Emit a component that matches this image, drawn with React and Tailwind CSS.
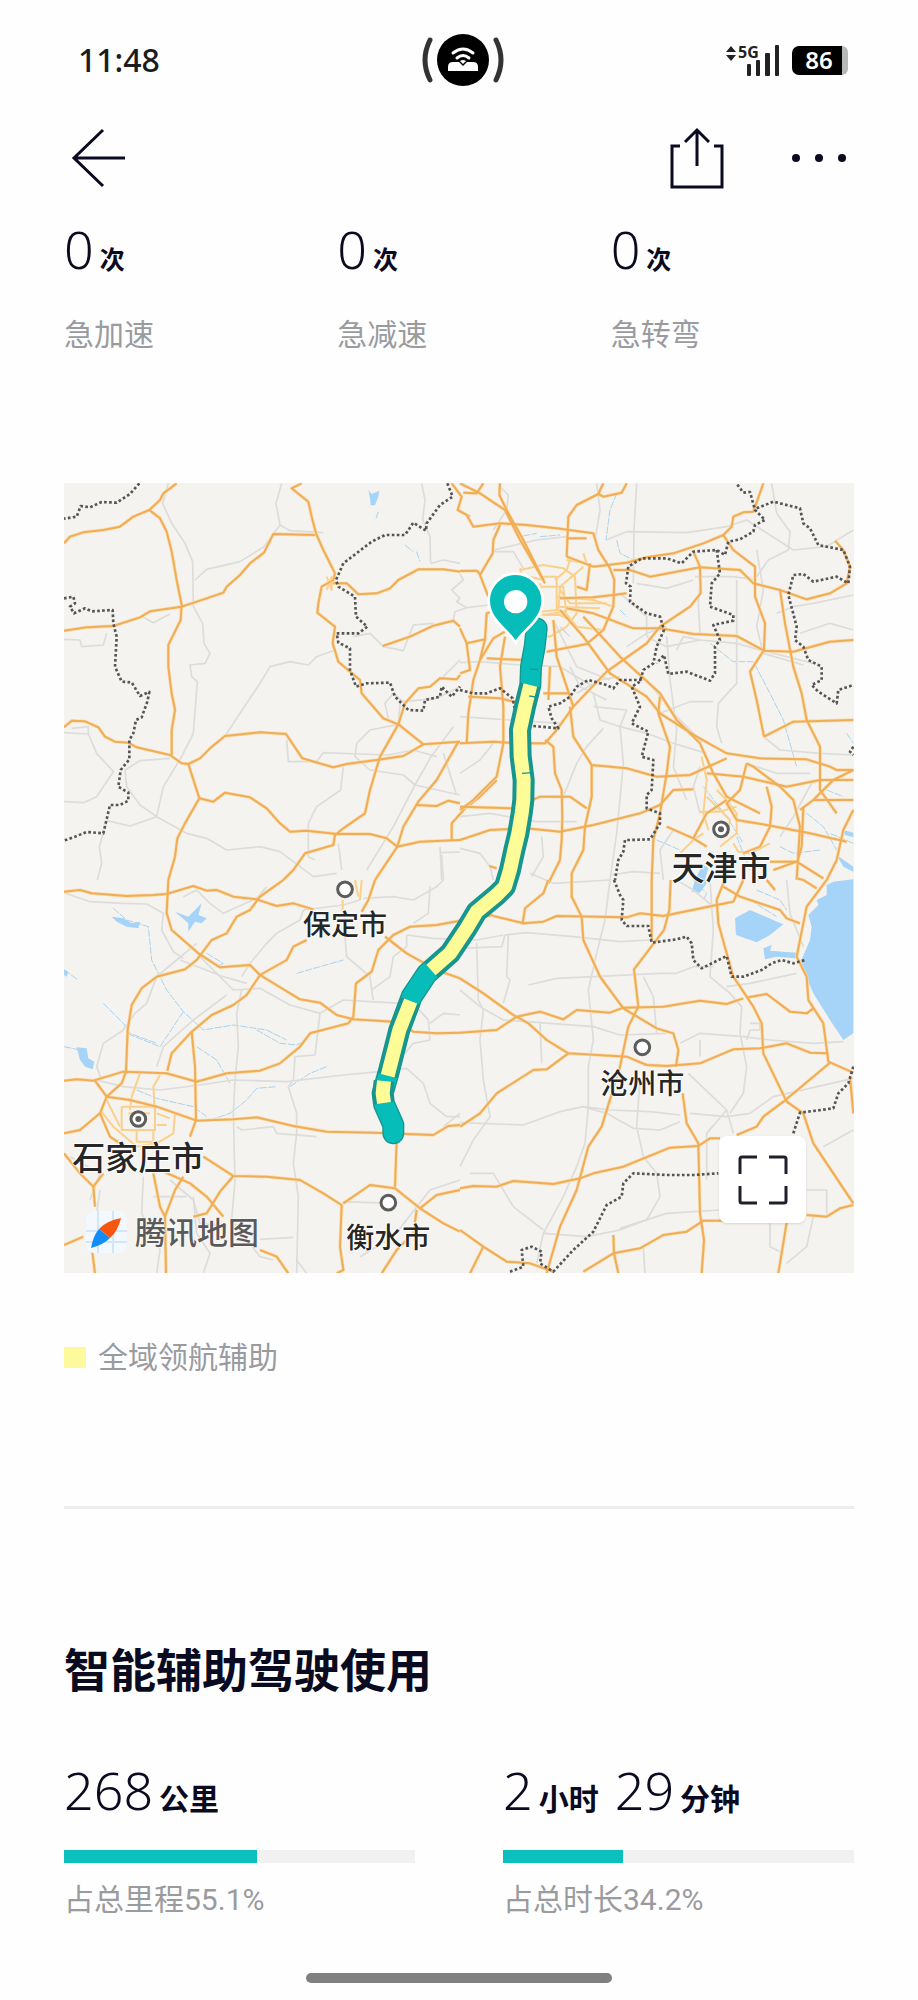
import React from "react";

// The map is drawn on four 1200x1200 tiles; lines are listed per tile.
const TILES = [
  {
    x: 0,
    y: 0,
    roads: [
      "325,10 308,70 335,130 375,190 398,245 400,380 428,430 432,490 450,520 435,550 390,555 395,590 412,605 400,760 365,830 310,920 290,1010",
      "665,10 648,70 660,135 612,200 540,245 440,268 405,300",
      "660,135 690,152 790,158",
      "1085,10 1095,60 1088,120 1110,170 1112,250",
      "1112,250 1150,240 1200,250",
      "12,478 60,480 65,500 130,495 140,460",
      "250,412 280,428 330,402",
      "495,768 600,610 630,560 690,545 745,555 770,530 820,512",
      "880,470 930,460 970,500 1030,512 1060,435 1120,430",
      "12,758 85,762 110,820 160,875 110,950 70,968 12,965",
      "85,762 85,740 35,745",
      "330,835 240,842 195,870 200,920 240,975 290,1010 380,1060 440,1075 500,1110 600,1100 660,1115 720,1160 760,1190 830,1180",
      "290,1010 210,1038 140,1022 118,1100 125,1150 112,1200",
      "680,780 685,845 770,845 790,818 900,822 985,825 1060,810 1130,830",
      "1015,733 930,750 890,790 885,830 930,870 1030,885 1065,915 1200,945",
      "850,860 842,930 770,980 745,1030 745,1130 765,1140",
      "1065,915 1000,1040 920,1170",
      "1150,820 1190,945",
      "1180,740 1110,835 1065,915",
      "985,715 975,670 1000,640 1030,665 1130,655 1200,620",
      "1015,733 1020,670",
      "835,1090 845,1170",
      "1140,1100 1145,1200",
      "1140,1118 1200,1116",
      "1150,590 1200,540",
      "1200,282 1210,300 1175,330 1200,355 1190,365 1220,383 1285,375",
      "1220,383 1185,395 1180,420",
    ],
    highways: [
      "12,190 30,170 70,157 130,150 180,140 220,110 268,90 300,60 310,40 350,10",
      "268,90 300,115 320,155 335,215 350,300 365,375 362,420 325,495 325,560 335,640 345,690 335,750 335,825",
      "12,452 80,442 160,438 240,412 270,394 365,380 440,355 490,338 500,320 540,285 570,250 612,218 640,162 765,165",
      "725,10 695,25 745,65 755,110 768,160 790,210 825,280 820,300 785,320 775,370 772,398 825,440 818,490 835,545 900,600 905,640 970,715 1015,733 1090,793 1200,785",
      "820,310 860,310 895,343 950,340 990,325 1015,300 1075,268 1150,268 1200,275",
      "968,498 1050,470 1120,437 1180,422 1200,440",
      "12,742 35,722 75,724 115,742 135,770 165,785 205,788 230,802 330,825 365,850 385,852 420,835 450,805 495,768 600,757 678,762 727,835 820,862 860,852 950,840 1030,828 1090,793",
      "385,852 418,955 375,1030 352,1075 345,1130 325,1200",
      "418,955 460,965 495,938 570,952 620,985 660,1030 690,1055 740,1052 830,1062 930,1062 980,1075 1012,1100 1080,1085 1200,1080",
      "1012,1100 945,1200",
      "1012,1100 1030,1040 1075,965 1130,900 1195,785",
      "1015,733 960,830 930,930 915,1000 850,1045 825,1065 820,1095 735,1120 700,1170 670,1200",
      "1015,733 1035,670 1075,625 1110,620 1140,595 1190,598 1200,585",
      "1070,975 1130,978 1165,962 1200,970",
      "1175,1080 1175,1030 1215,985 1260,950 1310,900",
      "1175,10 1205,50 1193,90 1230,110",
      "1288,1158 1310,1165",
    ],
    borders: [
      "238,10 210,42 170,68 125,66 90,82 62,78 50,110 12,116",
      "12,355 40,350 45,370 30,380 42,400 75,385 95,394 158,390 160,430 170,470 165,560 185,605 215,607 240,648 268,636 262,665 245,712 228,720 220,760 208,780 208,838 182,870 175,920 205,938 205,962 180,975 150,975 130,1060 80,1056 45,1070 12,1082",
      "1162,10 1178,50 1140,75 1100,130 1098,152 1060,128 1035,165 975,165 935,185 850,250 828,300 835,320 885,350 888,410 922,440 895,460 830,460 835,488 870,505 870,570 888,620 920,610 990,608 1005,650 1045,690 1090,692 1095,660 1140,650 1145,620 1175,650 1200,620",
    ],
    rivers: ["955,95 948,115", "1035,195 1060,215", "1070,215 1080,245"],
    water: ["925,30 935,42 958,32 955,50 945,76 932,76 930,55"],
    streets: ["800,290 815,330 815,290 800,330", "798,310 835,310"],
  },
  {
    x: 1200,
    y: 0,
    roads: [
      "120,20 145,45 140,90 100,150",
      "438,180 500,155 680,158 800,140 860,120 930,165 1000,210",
      "530,10 522,150 520,310",
      "410,10 420,90 405,180",
      "935,10 950,100 990,155 985,210 925,240 890,290",
      "1000,210 1100,200 1180,150",
      "705,290 820,290 890,300",
      "530,310 620,325 700,300",
      "720,310 715,370 720,460",
      "890,210 910,330 890,440 910,520 1030,555",
      "560,470 620,500 720,480 830,490 900,510 1060,550",
      "830,300 830,540 830,610 775,670 770,740 785,790",
      "620,470 630,600 650,750 640,860 680,960",
      "400,640 420,720 480,740 500,690 400,680",
      "350,640 420,600 480,590",
      "480,740 490,850 470,1060 450,1200",
      "480,740 560,760 640,790 740,820",
      "0,548 60,545 180,555 300,560 400,620",
      "0,710 150,720 300,730",
      "0,1010 90,1000 230,1025 350,1025",
      "430,745 380,800 350,850 310,950",
      "1180,450 1110,430 1020,460",
      "950,400 1000,380 1060,370 1180,345",
      "910,770 960,810 1080,820 1180,825",
      "600,700 690,665 760,665",
      "330,560 360,620 440,660",
      "650,510 670,470 720,480",
      "640,1050 600,1110 610,1200",
      "0,1105 60,1120 90,1160 100,1200",
      "860,850 950,880 1050,880",
      "720,860 700,920 720,1000",
      "1060,900 1000,1010 960,1070",
      "500,500 560,460 620,440",
      "100,210 230,180 320,170",
      "280,420 350,560 450,600",
      "480,340 560,410 560,470",
      "0,880 60,840 100,790",
      "560,600 640,700 700,760",
      "100,215 160,215 190,265",
      "210,1180 280,1210 450,1200",
      "245,1070 250,1130 215,1190",
      "450,1185 520,1175 600,1180",
    ],
    highways: [
      "0,10 60,40 135,90 175,170 215,240 250,300",
      "120,10 118,45 145,100 190,180 235,270 255,310",
      "10,38 50,40 70,10",
      "20,105 40,140 120,130 200,135 290,145 400,160 415,210 450,265 463,300 460,380 430,450 380,492 260,515",
      "500,10 485,38 430,50 415,42 430,10",
      "415,42 350,75 325,110 320,230",
      "320,175 380,175",
      "120,135 100,180 98,220 60,285 85,350",
      "320,230 400,260 500,248 560,232 640,220 730,190 790,165 815,140 820,110 850,97 880,95 910,10",
      "460,270 510,270 570,290 720,262 840,270 880,310 960,330 1040,358 1110,340 1160,310 1170,260 1150,210 1125,182",
      "790,165 820,210 885,260 885,350 915,430 912,510 870,575 890,660 912,770",
      "700,215 720,260 722,340 690,380 600,440 560,490 440,575 340,680 290,750 255,790 180,790 100,785 0,790",
      "320,385 400,400 520,445 600,445 700,462 830,468 912,512 1000,515 1110,485 1180,480",
      "300,390 370,470 450,580 560,650 600,700 710,770 800,820 900,835 1040,838 1110,860 1130,870 1180,870",
      "370,410 480,530 600,640 650,720 720,790 760,880 800,950 900,1000",
      "960,330 975,430 1000,560 1025,640 1040,720 1080,800 1080,930 1130,1000",
      "912,770 1000,725 1180,720",
      "600,650 595,700 630,800 620,880 600,1000 580,1080 575,1200",
      "330,680 340,770 395,855 500,865 590,890 690,885 800,835",
      "395,855 395,950 375,1040 370,1110 335,1180 335,1200",
      "0,980 160,985 240,950 330,950 380,985",
      "0,1080 90,1050 200,1045 300,1055 400,1035 540,1000 600,975 640,930 700,928",
      "280,420 290,530 340,680",
      "255,780 280,800 285,880 305,930 307,1010 305,1080 300,1140 265,1210",
      "0,445 20,490 30,570 0,580",
      "20,490 75,478 80,400 95,395",
      "75,478 60,540 40,600 25,700 20,790",
      "60,540 100,475 135,455",
      "135,470 120,560 130,680 130,790 110,890 40,960 0,990",
      "80,535 190,540",
      "0,273 50,272 62,285",
      "25,650 120,655 180,670",
      "860,850 880,860 960,920 1000,960 1020,1040 1010,1200",
      "860,850 840,930 800,970 830,1020 920,1035 1050,1060 1160,1085",
      "740,880 850,890 980,920 1080,900 1180,900",
      "920,920 935,980 930,1040 900,1100 850,1120",
      "1020,990 1060,960 1180,960",
      "1030,980 1025,1100 1012,1145",
      "1180,990 1150,1050 1130,1140 1100,1200",
      "620,1040 700,1075 740,1100",
      "700,1075 740,1000 800,960",
      "930,1145 1010,1145 1090,1195",
      "940,1170 1010,1145",
      "1060,960 1120,900 1180,870",
      "460,345 400,352 300,355",
      "500,340 460,345",
      "250,640 330,640",
      "390,250 380,330 350,320",
      "270,560 265,660",
    ],
    borders: [
      "832,14 850,38 870,36 885,90 915,120 885,135 880,155 840,178 805,185 795,225 770,210 700,215 665,250 620,235 545,235 505,260 498,310 512,320 510,365 560,400 600,410 612,450 590,500 580,550 550,570 540,605 515,620 540,680 515,730 565,755 545,830 580,840 575,930 560,945 560,985 600,1000 600,1030 570,1078 510,1080 495,1080 490,1115 475,1140 465,1200",
      "890,85 940,65 1020,85 1030,130 1050,145 1075,195 1150,210 1170,260 1165,310 1130,290 1060,305 1030,282 1000,285 985,345 1010,440 1005,480 1030,500 1045,540 1085,560 1085,600 1055,615 1075,635 1130,670 1135,630 1180,615",
      "770,210 780,280 755,310 750,380 820,405 820,422 760,435 780,480 765,500 765,580 750,602 680,575 625,582 612,525 590,550",
      "545,600 480,600 460,625 440,615 385,600 350,620 330,650 300,670 265,680 275,715 295,745 220,738",
      "0,630 40,640 80,640 120,625 158,655 165,690",
      "1180,800 1170,815 1180,825",
    ],
    rivers: [
      "470,40 450,90 438,180",
      "470,180 480,220 520,240",
      "750,490 820,545 880,545 930,640 970,720 1010,860",
      "190,168 230,160",
      "240,170 300,165",
      "730,920 800,1010 850,1090",
      "590,1080 660,1110",
      "1100,930 1150,950",
      "1040,1000 1090,1040 1130,1110",
      "960,1100 1000,1120 1080,1110",
      "480,390 500,410",
      "830,1070 870,1170",
      "1180,1090 1110,1060",
      "1160,760 1180,790",
      "320,460 300,440 330,470",
    ],
    water: ["1150,1050 1180,1058 1180,1072 1155,1065", "1130,1125 1180,1160 1180,1175 1150,1160", "730,1155 745,1165 735,1200 705,1200 720,1170"],
    streets: [
      "180,270 250,255 310,265 345,290 350,400 320,440 270,470 220,460",
      "250,290 290,290 290,390 240,395",
      "240,320 310,320 318,395 245,405",
      "245,340 240,310",
      "285,300 320,270 330,240",
      "320,240 380,250 370,220",
      "300,330 330,370 440,370",
      "290,350 400,360 460,380",
      "290,380 420,385",
      "295,395 300,320 370,260",
      "310,390 350,440 430,450",
      "180,265 185,285 250,300",
      "725,830 740,900 730,1000 745,1050",
      "720,995 780,995 830,980",
      "770,930 800,960 830,1000 830,1060 780,1100",
      "740,950 780,990 810,1020 800,1070",
      "660,1120 700,1080 730,1060",
      "820,1090 835,1115 870,1120 930,1090",
      "255,405 300,405 330,420",
    ],
  },
  {
    x: 0,
    y: 1200,
    roads: [
      "12,38 90,65 190,70 260,72 310,100 305,150 340,215 370,235",
      "370,50 410,30 450,70 490,100 590,55 620,20",
      "410,190 350,240 290,290 260,370 225,400 190,450 130,490 110,560 125,600",
      "420,230 520,330 600,325 690,375 780,400",
      "360,240 490,290 560,310",
      "545,290 570,250 620,190 650,160 720,120 730,90 850,75 900,60",
      "545,330 530,400 535,500 525,600 520,700 525,900 515,1020 600,1130 640,1140",
      "110,600 190,620 300,630 420,615 520,600 680,605 850,585 960,575 1040,565 1090,610 1110,670 1160,710 1200,710",
      "780,400 765,525 705,530 700,600 685,620 710,700 710,760 700,850 715,950 710,1180",
      "780,400 850,360 930,365 1030,370",
      "1035,520 1060,490 1110,480 1105,420 1060,370",
      "1040,165 1040,200 1000,230 990,290 935,330 940,360",
      "1110,20 1105,100 1060,130",
      "1145,-75 1150,0 1130,20 1060,60 1000,50 910,55",
      "530,740 545,750 640,740 650,760 770,770",
      "1200,700 1150,740",
      "1200,900 1110,930 1000,1070 900,1130",
      "1200,405 1150,400 1110,430",
      "1040,165 1120,175 1250,180 1330,165",
      "330,900 400,960 420,1030 500,1040",
      "30,830 120,880 90,960",
      "250,890 245,1000 300,1110 290,1180",
      "280,950 380,950",
      "600,1078 700,1072",
      "120,930 110,1000",
      "855,170 860,230 930,290 935,330",
      "850,965 1000,970",
      "430,1180 450,1120 410,1060 400,950",
      "710,1140 740,1180",
      "500,345 400,420 310,500 290,560",
    ],
    highways: [
      "12,35 60,30 95,40 200,48 280,45 320,42 400,18 440,32 470,30 520,50 590,58 650,78 700,70 760,88",
      "325,0 320,100 335,150 415,220 480,262 570,255 600,285 720,358 780,368 830,405 880,418 1000,425 1060,455 1130,460 1200,458",
      "670,0 600,50 570,90 530,110 500,160 455,180 410,240 375,268 290,290 245,325 215,375 203,450 198,575",
      "740,180 700,200 680,240 600,285 560,345 520,375 455,405 390,460 335,520 322,572",
      "395,455 405,560 408,720 390,770",
      "945,0 925,60 905,95",
      "12,602 50,598 100,602 190,575 320,580 410,605 500,580 600,572 660,550 720,500 750,460 865,430 880,410 888,310 935,275 955,210 1000,165 1050,140 1130,135 1200,122 1300,105",
      "975,170 1040,220 1130,270 1200,295",
      "198,575 185,610 140,650 120,700 60,750 12,760",
      "105,602 140,650 210,660 290,680 410,722 520,718 590,712 700,738 800,755 940,758 1120,765 1165,738 1200,735",
      "1010,780 1005,920",
      "850,970 930,915 1005,925 1080,985 1150,1030 1200,1055",
      "430,830 520,888 620,890 720,900 790,940 845,975 840,1100 850,1170 830,1180",
      "520,888 480,935 440,1000 400,1010",
      "12,820 60,880 100,920 105,980",
      "130,880 100,920",
      "280,880 300,980 315,1010 345,930 370,890",
      "300,870 390,910 440,950 490,1010",
      "315,1010 318,1180",
      "95,1100 105,1180",
      "12,1095 70,1070",
      "1070,990 1060,1060 1010,1110 965,1180",
      "1080,985 1130,945 1200,930",
      "600,1110 650,1130 685,1180",
      "120,700 150,770 180,790",
    ],
    borders: [],
    rivers: [
      "160,85 200,120 265,140 275,240 320,330 370,395 430,450 520,435 620,450 680,480",
      "590,450 660,490 710,495 740,480",
      "370,395 300,500 200,460",
      "130,370 190,430 210,460 290,490",
      "410,500 470,540 510,610",
      "450,720 510,700 560,660 590,625 650,620",
      "690,620 750,580 800,560",
      "230,630 290,655 400,680 440,710",
      "12,270 55,300",
      "710,280 850,240",
      "12,500 60,510",
      "440,220 490,250 470,260",
    ],
    water: [
      "345,95 385,110 425,70 415,105 440,115 425,130 405,125 385,155 385,130",
      "155,110 190,115 215,130 240,125 235,145 200,140 170,125",
      "50,502 80,505 85,535 103,545 98,568 75,560 60,540",
      "12,268 25,275 20,290 12,285",
    ],
    streets: [
      "185,680 285,680 285,750 185,750 185,680",
      "240,580 215,650 210,690",
      "300,585 280,620 285,700",
      "230,750 230,785 280,785 280,750",
      "120,690 160,740 230,800 290,790 340,760 345,700",
      "140,660 180,740",
      "205,700 270,700",
      "290,700 330,715",
      "290,735 320,735",
      "848,60 848,95",
      "905,0 900,60",
      "885,0 895,50",
    ],
  },
  {
    x: 1200,
    y: 1200,
    roads: [
      "450,0 435,120 410,220 385,330 400,480 385,560 385,680 375,790 350,860 310,950 250,1060 230,1150",
      "0,205 125,200 135,165 200,158 340,170 480,185 570,180",
      "145,165 140,290 150,300 130,370",
      "205,315 290,295 400,290 600,280 650,280 700,260 760,260",
      "50,190 55,360 70,390 60,480 70,600 90,710 40,780 0,860",
      "0,330 60,380 130,420 200,425 400,440 480,465 620,460",
      "240,430 245,550",
      "0,728 190,735 300,695 370,680 440,700 520,745 600,750 660,725",
      "370,680 450,690 570,695 660,705",
      "550,290 580,350 590,460",
      "540,600 530,740 550,830 590,880 600,950 560,1020 480,1050 380,1070 250,1060",
      "30,880 100,880 160,980 250,1050",
      "685,580 800,690 820,760",
      "660,490 720,460 850,470 930,480 1060,490 1150,485",
      "750,0 760,150 750,290 810,340 845,380 840,460 860,560 850,640 810,700",
      "690,700 800,710 870,700 940,650 1180,595",
      "480,1045 620,1000 780,990",
      "550,1100 555,1180",
      "980,0 990,100 1030,200",
      "800,320 870,310 1010,280",
      "650,0 700,30 760,80",
      "1040,930 1100,930 1100,1000",
      "1060,1010 1040,1100 980,1150",
      "1180,750 1090,800",
      "930,1030 930,1100 960,1115",
      "870,430 900,430 900,450 870,450 860,480",
      "800,690 740,760 740,900",
      "720,480 720,530",
    ],
    highways: [
      "100,108 190,130 250,125 290,108 500,112 540,100 610,108 770,75 820,65 850,0",
      "265,0 250,40 195,85 188,130",
      "335,-5 335,50 365,110 370,180 420,290 490,385 590,445 640,460 655,510 648,560",
      "575,0 575,180",
      "632,0 628,90 612,150 522,268 535,380 505,440 480,560 425,740 385,800 350,930 300,1040 260,1180",
      "0,295 70,340 160,405 205,430 260,480 325,520 500,530 560,555 620,558 720,550 820,508 900,505 980,490 1050,518 1105,520",
      "0,458 110,450 170,410 240,395 310,418 350,390 450,398 490,383 610,380 720,362 800,372 850,355",
      "0,740 60,700 110,640 220,570 260,568 325,520",
      "790,10 770,60 775,130 800,220 820,290 880,380 905,430 910,520 980,665 1030,700 1060,790 1180,970",
      "865,352 920,342 990,395 1040,400 1060,385",
      "1100,0 1040,80 1010,230 1040,290 1045,360 1090,430 1105,545 1180,578",
      "1110,548 970,665 910,710 890,740 830,765",
      "668,640 680,730 715,790 720,1000 732,1080 725,1180",
      "0,925 40,918 110,920 160,903 280,912 360,895 400,880 490,860 630,803 715,798 750,775 780,775",
      "0,1050 70,1100 140,1145 210,1150 280,1175",
      "70,1100 30,1180",
      "370,1175 460,1120 540,1105 610,1065 680,1055 730,1022 790,1022",
      "460,1065 462,1120 475,1180",
      "980,1028 955,1180",
      "1040,1005 1100,1010 1140,985 1180,975",
      "790,20 840,50 960,90 980,115 1020,130",
      "1170,590 1180,700",
      "920,0 945,30",
      "1010,-5 1030,0 1070,25",
    ],
    borders: [
      "462,0 480,45 490,60 485,120 500,138 565,138 575,188 650,178 680,170 695,190 700,240 725,265 800,228 815,290 850,290 905,270 935,250 965,240 1000,250 1035,240",
      "1180,560 1165,610 1135,640 1120,685 1020,698 1000,760",
      "150,1175 190,1160 185,1110 215,1100 245,1115 240,1150 280,1175 340,1110 400,1055 440,975 485,950 490,910 520,880 620,885 700,885 775,880",
    ],
    rivers: ["700,0 740,40 730,60", "870,60 950,110", "890,30 960,60 980,90"],
    water: [
      "1180,-2 1120,5 1100,15 1100,45 1070,60 1075,75 1045,105 1055,140 1050,180 1020,250 1060,340 1110,420 1150,480 1180,460",
      "825,115 870,90 970,133 930,165 890,187 828,165",
      "910,205 935,195 930,212 1010,218 1005,235 950,230 915,238",
      "705,0 735,0 740,10 720,38 695,35",
    ],
    streets: [],
  },
];

const CITIES = [
  { name: "天津市", x: 1983, y: 1048, labelY: 1162, capital: true },
  { name: "石家庄市", x: 235, y: 1917, labelY: 2030, capital: true },
  { name: "保定市", x: 855, y: 1228, labelY: 1332, capital: false },
  { name: "沧州市", x: 1747, y: 1702, labelY: 1809, capital: false },
  { name: "衡水市", x: 985, y: 2168, labelY: 2272, capital: false },
];

const ROUTE =
  "1430,445 1424,500 1413,560 1411,615 1395,680 1380,750 1382,830 1391,900 1390,960 1385,1000 1375,1060 1363,1110 1350,1170 1335,1220 1310,1245 1250,1295 1220,1345 1170,1420 1100,1482 1055,1550 1018,1650 985,1780 968,1840 972,1872 1000,1935 1000,1960";

const ASSISTED = [
  "1411,615 1395,680 1380,750 1382,830 1391,900 1390,960 1385,1000 1375,1060 1363,1110 1350,1170 1335,1220 1310,1245 1250,1295 1220,1345 1170,1420 1113,1470",
  "1052,1563 1018,1650 983,1787",
  "972,1803 968,1840 972,1869",
];

const EVENTS = [
  { value: 0, unit: "次", label: "急加速" },
  { value: 0, unit: "次", label: "急减速" },
  { value: 0, unit: "次", label: "急转弯" },
];

const USAGE = [
  { parts: [["268", "公里"]], label: "占总里程", percent: 55.1 },
  { parts: [["2", "小时"], ["29", "分钟"]], label: "占总时长", percent: 34.2 },
];

const Lines = ({ items, ...rest }) => (
  <g fill="none" strokeLinejoin="round" {...rest}>
    {items.map((points) => (
      <polyline key={points} points={points} />
    ))}
  </g>
);

const StatusBar = () => (
  <div className="flex h-[120px] items-center justify-between px-[70px]">
    <span className="flex-1 pl-2 text-[32px] leading-none font-medium text-[#1c1c1c]">11:48</span>

    <svg width="82" height="52" viewBox="0 0 82 52" fill="none">
      <path d="M8 6Q-2 26 8 46M74 6Q84 26 74 46" stroke="#333" strokeWidth="5" strokeLinecap="round" />
      <circle cx="41" cy="26" r="26" fill="#000" />
      <path d="M26 37v-4q0-5 5-5h20q5 0 5 5v4z" fill="#fff" />
      <path d="M33 24q8-7 16 0l-8 8z" fill="#000" />
      <path d="M31 19q10-8 20 0M35 24q6-5 12 0" stroke="#fff" strokeWidth="3" strokeLinecap="round" />
      <path d="M38 27q3-2 6 0l-3 3z" fill="#fff" />
    </svg>

    <div className="flex flex-1 items-center justify-end gap-3">
      <div className="relative">
        <svg width="54" height="32" viewBox="0 0 54 32" fill="#222">
          <path d="M0 8l5-6 5 6zM0 11h10l-5 6z" />
          <rect x="21" y="20" width="4" height="12" rx="1" />
          <rect x="30" y="16" width="4" height="16" rx="1" />
          <rect x="39" y="9" width="5" height="23" rx="1" />
          <rect x="49" y="1" width="4" height="31" rx="1" />
        </svg>
        <span className="absolute top-0 left-3 text-[16px] leading-4 font-bold text-[#222]">5G</span>
      </div>
      <div className="flex items-center">
        <span className="flex h-[29px] w-[50px] items-center justify-center rounded-l-[7px] bg-black pl-1 text-[24px] leading-none font-semibold text-white">
          86
        </span>
        <span className="h-[29px] w-[6px] rounded-r-[6px] bg-[#b8b8b8]" />
      </div>
    </div>
  </div>
);

const NavBar = () => (
  <header className="flex h-[76px] items-center justify-between px-[71px] text-[#0a0a20]">
    <button aria-label="返回">
      <svg width="54" height="60" viewBox="0 0 54 60" fill="none" stroke="currentColor" strokeWidth="3">
        <path d="M32 2L3 30l29 28M3 30h51" />
      </svg>
    </button>
    <div className="flex items-center gap-[66px]">
      <button aria-label="分享">
        <svg width="56" height="62" viewBox="0 0 56 62" fill="none" stroke="currentColor" strokeWidth="3">
          <path d="M11 19H3v41h50V19h-8M28 39V3M16 15L28 3l12 12" />
        </svg>
      </button>
      <button aria-label="更多">
        <svg width="56" height="10" viewBox="0 0 56 10" fill="currentColor">
          <circle cx="5" cy="5" r="4" />
          <circle cx="28" cy="5" r="4" />
          <circle cx="51" cy="5" r="4" />
        </svg>
      </button>
    </div>
  </header>
);

const RouteMap = () => (
  <div className="relative overflow-hidden bg-[#f4f3ef]">
    <svg viewBox="12 9 2370 2370" className="block w-full">
      {TILES.map((tile) => (
        <g key={`${tile.x}-${tile.y}`} transform={`translate(${tile.x} ${tile.y})`}>
          {tile.water.map((points) => (
            <polygon key={points} points={points} fill="#a6d4f8" />
          ))}
          <Lines items={tile.rivers} stroke="#a9d3ee" strokeWidth="3" strokeDasharray="22 4" />
          <Lines items={tile.roads} stroke="#dcdcdb" strokeWidth="5" />
          <Lines items={tile.streets} stroke="#fad08a" strokeWidth="6" />
        </g>
      ))}
      {TILES.map((tile) => (
        <g key={`${tile.x}-${tile.y}`} transform={`translate(${tile.x} ${tile.y})`}>
          <Lines items={tile.highways} stroke="#fbdcaa" strokeWidth="10" />
          <Lines items={tile.highways} stroke="#f0ad58" strokeWidth="6" />
          <Lines items={tile.borders} stroke="#555" strokeWidth="8" strokeDasharray="8 7" />
        </g>
      ))}

      <g fill="none" strokeLinejoin="round">
        <polyline points={ROUTE} stroke="#16968f" strokeWidth="66" strokeLinecap="round" />
        <polyline points={ROUTE} stroke="#07bdb9" strokeWidth="58" strokeLinecap="round" />
        {ASSISTED.map((points) => (
          <React.Fragment key={points}>
            <polyline points={points} stroke="#16968f" strokeWidth="62" />
            <polyline points={points} stroke="#fdfc96" strokeWidth="42" />
          </React.Fragment>
        ))}
        <path d="M1410 568h24M1408 648l26 4M1386 880l30-2" stroke="#16968f" strokeWidth="4" />
      </g>

      <path
        d="M1367 488C1345 450 1286 420 1286 362a81 81 0 0 1 162 0C1448 420 1389 450 1367 488z"
        fill="#07bdb9"
        stroke="#fff"
        strokeWidth="8"
      />
      <circle cx="1367" cy="365" r="35" fill="#fff" />

      {CITIES.map((city) => (
        <g key={city.name}>
          <circle cx={city.x} cy={city.y} r="22" fill="#fff" stroke="#5c5c5c" strokeWidth="9" />
          {city.capital && <circle cx={city.x} cy={city.y} r="9" fill="#5c5c5c" />}
        </g>
      ))}
    </svg>

    {CITIES.map((city) => (
      <span
        key={city.name}
        className={`absolute -translate-x-1/2 -translate-y-1/2 leading-none font-medium whitespace-nowrap text-[#262626] [text-shadow:0_0_2px_#fff,0_0_2px_#fff,1px_1px_1px_#fff,-1px_-1px_1px_#fff] ${
          city.capital ? "text-[33px]" : "text-[28px]"
        }`}
        style={{
          left: `${((city.x - 12) / 2370) * 100}%`,
          top: `${((city.labelY - 9) / 2370) * 100}%`,
        }}
      >
        {city.name}
      </span>
    ))}

    <div className="absolute bottom-[20px] left-[22px] flex items-center gap-2">
      <svg width="41" height="42" viewBox="0 0 41 42">
        <rect width="41" height="42" rx="8" fill="#f2f8fd" />
        <path d="M0 20h41M27 0v42M0 31h41M12 0v42" stroke="#d5e5f8" strokeWidth="2" />
        <path d="M35 7Q20 10 13 18L24 27Q32 20 35 7z" fill="#f8560f" />
        <path d="M5 37Q7 25 13 18L24 27Q17 34 5 37z" fill="#118cf8" />
      </svg>
      <span className="text-[31px] leading-none font-medium text-[#5a5a5a] [text-shadow:0_0_2px_#fff,0_0_2px_#fff]">
        腾讯地图
      </span>
    </div>

    <button
      aria-label="全屏"
      className="absolute right-[48px] bottom-[50px] flex h-[87px] w-[87px] items-center justify-center rounded-lg bg-white shadow-sm"
    >
      <svg width="50" height="50" viewBox="0 0 50 50" fill="none" stroke="#1f1f2b" strokeWidth="3">
        <path d="M2 19V4q0-2 2-2h15M31 2h15q2 0 2 2v15M48 31v15q0 2-2 2H31M19 48H4q-2 0-2-2V31" />
      </svg>
    </button>
  </div>
);

export default function App() {
  return (
    <div className="bg-[#fefefe] font-['Noto_Sans','Noto_Sans_CJK_SC',sans-serif] text-[#0a0a20]">
      <StatusBar />
      <NavBar />

      <main className="px-16">
        <section className="grid grid-cols-3 gap-[30px] pt-[21px]">
          {EVENTS.map((item) => (
            <div key={item.label}>
              <p className="flex items-baseline gap-[6px] leading-[64px]">
                <span className="text-[52px] font-light">{item.value}</span>
                <span className="text-[25px] font-bold">{item.unit}</span>
              </p>
              <p className="mt-[23px] text-[30px] leading-10 font-normal text-[#999b9f]">{item.label}</p>
            </div>
          ))}
        </section>

        <section className="mt-[129px]">
          <RouteMap />
          <div className="mt-[64px] flex items-center gap-3">
            <span className="h-[21px] w-[22px] bg-[#fdfa9b]" />
            <span className="text-[30px] leading-10 font-normal text-[#999b9f]">全域领航辅助</span>
          </div>
        </section>

        <hr className="mt-[129px] border-t-[3px] border-[#ededee]" />

        <section className="pt-[128px]">
          <h2 className="text-[46px] leading-[64px] font-bold">智能辅助驾驶使用</h2>
          <div className="mt-[57px] grid grid-cols-2 gap-[88px]">
            {USAGE.map((item) => (
              <div key={item.label}>
                <p className="flex items-baseline gap-4 leading-[64px]">
                  {item.parts.map(([value, unit]) => (
                    <span key={unit} className="flex items-baseline gap-[6px]">
                      <span className="text-[52px] font-light">{value}</span>
                      <span className="text-[30px] font-bold">{unit}</span>
                    </span>
                  ))}
                </p>
                <div className="mt-[19px] h-[13px] bg-[#f1f1f1]">
                  <div className="h-full bg-[#0bbfbc]" style={{ width: `${item.percent}%` }} />
                </div>
                <p className="mt-[17px] font-['Roboto','Noto_Sans_CJK_SC',sans-serif] text-[30px] leading-10 font-normal text-[#999b9f]">
                  {item.label}
                  {item.percent}%
                </p>
              </div>
            ))}
          </div>
        </section>
      </main>

      <div className="mx-auto mt-[53px] h-[10px] w-1/3 rounded-full bg-[#808080]" />
      <div className="h-[18px]" />
    </div>
  );
}
